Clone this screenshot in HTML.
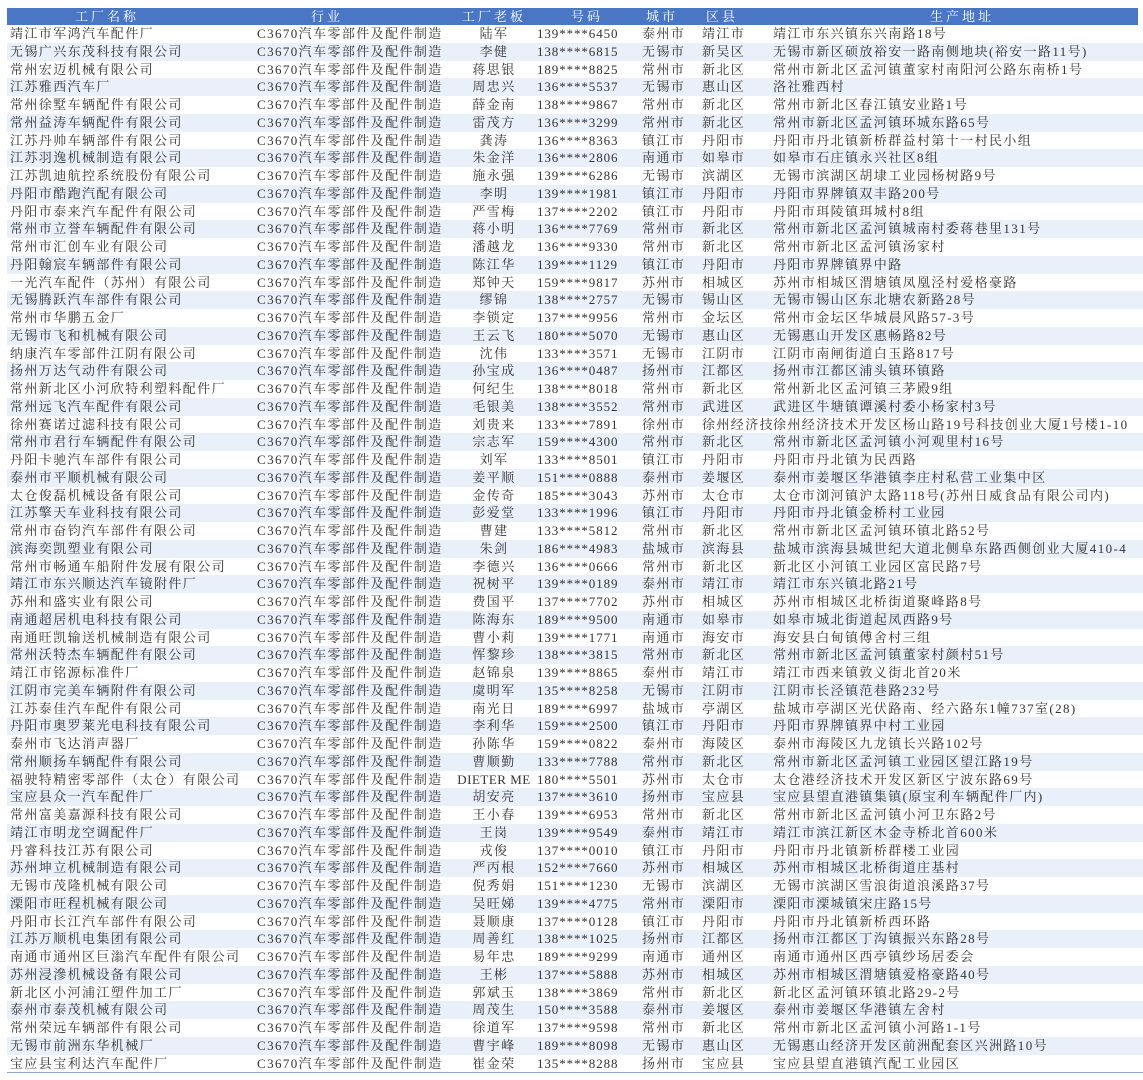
<!DOCTYPE html>
<html><head><meta charset="utf-8">
<style>
html,body{margin:0;padding:0;background:#fff;}
body{width:1143px;height:1080px;overflow:hidden;position:relative;font-family:"Liberation Serif","Noto Serif CJK SC",serif;color:#333;font-size:13px;}
.h{position:absolute;left:7px;top:8px;width:1131px;height:17px;background:#4a76c6;color:#fff;font-size:13px;letter-spacing:3px;}
.h span{position:absolute;top:0;line-height:17px;text-align:center;white-space:nowrap;}
#rows{position:absolute;left:7px;top:25px;width:1136px;border-bottom:1.5px solid #8fa8d4;}
.r{position:relative;height:17.76px;line-height:17.76px;white-space:nowrap;letter-spacing:1.4px;}
.r:nth-child(even){background:#eaf0f9;}
.r span{position:absolute;top:0;overflow:hidden;}
.c1{left:3px;width:248px}
.c2{left:250px;width:195px}
.c3{left:443px;width:88px;text-align:center}
.c4{left:530px;width:105px;letter-spacing:0.9px}
.c5{left:635px;width:60px}
.c6{left:695px;width:70px}
.c7{left:766px;width:380px}
</style></head><body>
<div class="h">
<span style="left:50px;width:100px">工厂名称</span>
<span style="left:280px;width:80px">行业</span>
<span style="left:443px;width:88px">工厂老板</span>
<span style="left:540px;width:80px">号码</span>
<span style="left:625px;width:60px">城市</span>
<span style="left:685px;width:60px">区县</span>
<span style="left:900px;width:110px">生产地址</span>
</div>
<div id="rows">
<div class="r"><span class="c1">靖江市军鸿汽车配件厂</span><span class="c2">C3670汽车零部件及配件制造</span><span class="c3">陆军</span><span class="c4">139****6450</span><span class="c5">泰州市</span><span class="c6">靖江市</span><span class="c7">靖江市东兴镇东兴南路18号</span></div>
<div class="r"><span class="c1">无锡广兴东茂科技有限公司</span><span class="c2">C3670汽车零部件及配件制造</span><span class="c3">李健</span><span class="c4">138****6815</span><span class="c5">无锡市</span><span class="c6">新吴区</span><span class="c7">无锡市新区硕放裕安一路南侧地块(裕安一路11号)</span></div>
<div class="r"><span class="c1">常州宏迈机械有限公司</span><span class="c2">C3670汽车零部件及配件制造</span><span class="c3">蒋思银</span><span class="c4">189****8825</span><span class="c5">常州市</span><span class="c6">新北区</span><span class="c7">常州市新北区孟河镇董家村南阳河公路东南桥1号</span></div>
<div class="r"><span class="c1">江苏雅西汽车厂</span><span class="c2">C3670汽车零部件及配件制造</span><span class="c3">周忠兴</span><span class="c4">136****5537</span><span class="c5">无锡市</span><span class="c6">惠山区</span><span class="c7">洛社雅西村</span></div>
<div class="r"><span class="c1">常州徐墅车辆配件有限公司</span><span class="c2">C3670汽车零部件及配件制造</span><span class="c3">薛金南</span><span class="c4">138****9867</span><span class="c5">常州市</span><span class="c6">新北区</span><span class="c7">常州市新北区春江镇安业路1号</span></div>
<div class="r"><span class="c1">常州益涛车辆配件有限公司</span><span class="c2">C3670汽车零部件及配件制造</span><span class="c3">雷茂方</span><span class="c4">136****3299</span><span class="c5">常州市</span><span class="c6">新北区</span><span class="c7">常州市新北区孟河镇环城东路65号</span></div>
<div class="r"><span class="c1">江苏丹帅车辆部件有限公司</span><span class="c2">C3670汽车零部件及配件制造</span><span class="c3">龚涛</span><span class="c4">136****8363</span><span class="c5">镇江市</span><span class="c6">丹阳市</span><span class="c7">丹阳市丹北镇新桥群益村第十一村民小组</span></div>
<div class="r"><span class="c1">江苏羽逸机械制造有限公司</span><span class="c2">C3670汽车零部件及配件制造</span><span class="c3">朱金洋</span><span class="c4">136****2806</span><span class="c5">南通市</span><span class="c6">如皋市</span><span class="c7">如皋市石庄镇永兴社区8组</span></div>
<div class="r"><span class="c1">江苏凯迪航控系统股份有限公司</span><span class="c2">C3670汽车零部件及配件制造</span><span class="c3">施永强</span><span class="c4">139****6286</span><span class="c5">无锡市</span><span class="c6">滨湖区</span><span class="c7">无锡市滨湖区胡埭工业园杨树路9号</span></div>
<div class="r"><span class="c1">丹阳市酷跑汽配有限公司</span><span class="c2">C3670汽车零部件及配件制造</span><span class="c3">李明</span><span class="c4">139****1981</span><span class="c5">镇江市</span><span class="c6">丹阳市</span><span class="c7">丹阳市界牌镇双丰路200号</span></div>
<div class="r"><span class="c1">丹阳市泰来汽车配件有限公司</span><span class="c2">C3670汽车零部件及配件制造</span><span class="c3">严雪梅</span><span class="c4">137****2202</span><span class="c5">镇江市</span><span class="c6">丹阳市</span><span class="c7">丹阳市珥陵镇珥城村8组</span></div>
<div class="r"><span class="c1">常州市立誉车辆配件有限公司</span><span class="c2">C3670汽车零部件及配件制造</span><span class="c3">蒋小明</span><span class="c4">136****7769</span><span class="c5">常州市</span><span class="c6">新北区</span><span class="c7">常州市新北区孟河镇城南村委蒋巷里131号</span></div>
<div class="r"><span class="c1">常州市汇创车业有限公司</span><span class="c2">C3670汽车零部件及配件制造</span><span class="c3">潘越龙</span><span class="c4">136****9330</span><span class="c5">常州市</span><span class="c6">新北区</span><span class="c7">常州市新北区孟河镇汤家村</span></div>
<div class="r"><span class="c1">丹阳翰宸车辆部件有限公司</span><span class="c2">C3670汽车零部件及配件制造</span><span class="c3">陈江华</span><span class="c4">139****1129</span><span class="c5">镇江市</span><span class="c6">丹阳市</span><span class="c7">丹阳市界牌镇界中路</span></div>
<div class="r"><span class="c1">一光汽车配件（苏州）有限公司</span><span class="c2">C3670汽车零部件及配件制造</span><span class="c3">郑钟天</span><span class="c4">159****9817</span><span class="c5">苏州市</span><span class="c6">相城区</span><span class="c7">苏州市相城区渭塘镇凤凰泾村爱格豪路</span></div>
<div class="r"><span class="c1">无锡腾跃汽车部件有限公司</span><span class="c2">C3670汽车零部件及配件制造</span><span class="c3">缪锦</span><span class="c4">138****2757</span><span class="c5">无锡市</span><span class="c6">锡山区</span><span class="c7">无锡市锡山区东北塘农新路28号</span></div>
<div class="r"><span class="c1">常州市华鹏五金厂</span><span class="c2">C3670汽车零部件及配件制造</span><span class="c3">李锁定</span><span class="c4">137****9956</span><span class="c5">常州市</span><span class="c6">金坛区</span><span class="c7">常州市金坛区华城晨风路57-3号</span></div>
<div class="r"><span class="c1">无锡市飞和机械有限公司</span><span class="c2">C3670汽车零部件及配件制造</span><span class="c3">王云飞</span><span class="c4">180****5070</span><span class="c5">无锡市</span><span class="c6">惠山区</span><span class="c7">无锡惠山开发区惠畅路82号</span></div>
<div class="r"><span class="c1">纳康汽车零部件江阴有限公司</span><span class="c2">C3670汽车零部件及配件制造</span><span class="c3">沈伟</span><span class="c4">133****3571</span><span class="c5">无锡市</span><span class="c6">江阴市</span><span class="c7">江阴市南闸街道白玉路817号</span></div>
<div class="r"><span class="c1">扬州万达气动件有限公司</span><span class="c2">C3670汽车零部件及配件制造</span><span class="c3">孙宝成</span><span class="c4">136****0487</span><span class="c5">扬州市</span><span class="c6">江都区</span><span class="c7">扬州市江都区浦头镇环镇路</span></div>
<div class="r"><span class="c1">常州新北区小河欣特利塑料配件厂</span><span class="c2">C3670汽车零部件及配件制造</span><span class="c3">何纪生</span><span class="c4">138****8018</span><span class="c5">常州市</span><span class="c6">新北区</span><span class="c7">常州新北区孟河镇三茅殿9组</span></div>
<div class="r"><span class="c1">常州远飞汽车配件有限公司</span><span class="c2">C3670汽车零部件及配件制造</span><span class="c3">毛银美</span><span class="c4">138****3552</span><span class="c5">常州市</span><span class="c6">武进区</span><span class="c7">武进区牛塘镇谭溪村委小杨家村3号</span></div>
<div class="r"><span class="c1">徐州赛诺过滤科技有限公司</span><span class="c2">C3670汽车零部件及配件制造</span><span class="c3">刘贵来</span><span class="c4">133****7891</span><span class="c5">徐州市</span><span class="c6">徐州经济技</span><span class="c7">徐州经济技术开发区杨山路19号科技创业大厦1号楼1-10</span></div>
<div class="r"><span class="c1">常州市君行车辆配件有限公司</span><span class="c2">C3670汽车零部件及配件制造</span><span class="c3">宗志军</span><span class="c4">159****4300</span><span class="c5">常州市</span><span class="c6">新北区</span><span class="c7">常州市新北区孟河镇小河观里村16号</span></div>
<div class="r"><span class="c1">丹阳卡驰汽车部件有限公司</span><span class="c2">C3670汽车零部件及配件制造</span><span class="c3">刘军</span><span class="c4">133****8501</span><span class="c5">镇江市</span><span class="c6">丹阳市</span><span class="c7">丹阳市丹北镇为民西路</span></div>
<div class="r"><span class="c1">泰州市平顺机械有限公司</span><span class="c2">C3670汽车零部件及配件制造</span><span class="c3">姜平顺</span><span class="c4">151****0888</span><span class="c5">泰州市</span><span class="c6">姜堰区</span><span class="c7">泰州市姜堰区华港镇李庄村私营工业集中区</span></div>
<div class="r"><span class="c1">太仓俊磊机械设备有限公司</span><span class="c2">C3670汽车零部件及配件制造</span><span class="c3">金传奇</span><span class="c4">185****3043</span><span class="c5">苏州市</span><span class="c6">太仓市</span><span class="c7">太仓市浏河镇沪太路118号(苏州日威食品有限公司内)</span></div>
<div class="r"><span class="c1">江苏擎天车业科技有限公司</span><span class="c2">C3670汽车零部件及配件制造</span><span class="c3">彭爱堂</span><span class="c4">133****1996</span><span class="c5">镇江市</span><span class="c6">丹阳市</span><span class="c7">丹阳市丹北镇金桥村工业园</span></div>
<div class="r"><span class="c1">常州市奋钧汽车部件有限公司</span><span class="c2">C3670汽车零部件及配件制造</span><span class="c3">曹建</span><span class="c4">133****5812</span><span class="c5">常州市</span><span class="c6">新北区</span><span class="c7">常州市新北区孟河镇环镇北路52号</span></div>
<div class="r"><span class="c1">滨海奕凯塑业有限公司</span><span class="c2">C3670汽车零部件及配件制造</span><span class="c3">朱剑</span><span class="c4">186****4983</span><span class="c5">盐城市</span><span class="c6">滨海县</span><span class="c7">盐城市滨海县城世纪大道北侧阜东路西侧创业大厦410-4</span></div>
<div class="r"><span class="c1">常州市畅通车船附件发展有限公司</span><span class="c2">C3670汽车零部件及配件制造</span><span class="c3">李德兴</span><span class="c4">136****0666</span><span class="c5">常州市</span><span class="c6">新北区</span><span class="c7">新北区小河镇工业园区富民路7号</span></div>
<div class="r"><span class="c1">靖江市东兴顺达汽车镜附件厂</span><span class="c2">C3670汽车零部件及配件制造</span><span class="c3">祝树平</span><span class="c4">139****0189</span><span class="c5">泰州市</span><span class="c6">靖江市</span><span class="c7">靖江市东兴镇北路21号</span></div>
<div class="r"><span class="c1">苏州和盛实业有限公司</span><span class="c2">C3670汽车零部件及配件制造</span><span class="c3">费国平</span><span class="c4">137****7702</span><span class="c5">苏州市</span><span class="c6">相城区</span><span class="c7">苏州市相城区北桥街道聚峰路8号</span></div>
<div class="r"><span class="c1">南通超居机电科技有限公司</span><span class="c2">C3670汽车零部件及配件制造</span><span class="c3">陈海东</span><span class="c4">189****9500</span><span class="c5">南通市</span><span class="c6">如皋市</span><span class="c7">如皋市城北街道起凤西路9号</span></div>
<div class="r"><span class="c1">南通旺凯输送机械制造有限公司</span><span class="c2">C3670汽车零部件及配件制造</span><span class="c3">曹小莉</span><span class="c4">139****1771</span><span class="c5">南通市</span><span class="c6">海安市</span><span class="c7">海安县白甸镇傅舍村三组</span></div>
<div class="r"><span class="c1">常州沃特杰车辆配件有限公司</span><span class="c2">C3670汽车零部件及配件制造</span><span class="c3">恽黎珍</span><span class="c4">138****3815</span><span class="c5">常州市</span><span class="c6">新北区</span><span class="c7">常州市新北区孟河镇董家村颜村51号</span></div>
<div class="r"><span class="c1">靖江市铭源标准件厂</span><span class="c2">C3670汽车零部件及配件制造</span><span class="c3">赵锦泉</span><span class="c4">139****8865</span><span class="c5">泰州市</span><span class="c6">靖江市</span><span class="c7">靖江市西来镇敦义街北首20米</span></div>
<div class="r"><span class="c1">江阴市完美车辆附件有限公司</span><span class="c2">C3670汽车零部件及配件制造</span><span class="c3">虞明军</span><span class="c4">135****8258</span><span class="c5">无锡市</span><span class="c6">江阴市</span><span class="c7">江阴市长泾镇范巷路232号</span></div>
<div class="r"><span class="c1">江苏泰佳汽车配件有限公司</span><span class="c2">C3670汽车零部件及配件制造</span><span class="c3">南光日</span><span class="c4">189****6997</span><span class="c5">盐城市</span><span class="c6">亭湖区</span><span class="c7">盐城市亭湖区光伏路南、经六路东1幢737室(28)</span></div>
<div class="r"><span class="c1">丹阳市奥罗莱光电科技有限公司</span><span class="c2">C3670汽车零部件及配件制造</span><span class="c3">李利华</span><span class="c4">159****2500</span><span class="c5">镇江市</span><span class="c6">丹阳市</span><span class="c7">丹阳市界牌镇界中村工业园</span></div>
<div class="r"><span class="c1">泰州市飞达消声器厂</span><span class="c2">C3670汽车零部件及配件制造</span><span class="c3">孙陈华</span><span class="c4">159****0822</span><span class="c5">泰州市</span><span class="c6">海陵区</span><span class="c7">泰州市海陵区九龙镇长兴路102号</span></div>
<div class="r"><span class="c1">常州顺扬车辆配件有限公司</span><span class="c2">C3670汽车零部件及配件制造</span><span class="c3">曹顺勤</span><span class="c4">133****7788</span><span class="c5">常州市</span><span class="c6">新北区</span><span class="c7">常州市新北区孟河镇工业园区望江路19号</span></div>
<div class="r"><span class="c1">福驶特精密零部件（太仓）有限公司</span><span class="c2">C3670汽车零部件及配件制造</span><span class="c3" style="letter-spacing:0.5px">DIETER ME</span><span class="c4">180****5501</span><span class="c5">苏州市</span><span class="c6">太仓市</span><span class="c7">太仓港经济技术开发区新区宁波东路69号</span></div>
<div class="r"><span class="c1">宝应县众一汽车配件厂</span><span class="c2">C3670汽车零部件及配件制造</span><span class="c3">胡安亮</span><span class="c4">137****3610</span><span class="c5">扬州市</span><span class="c6">宝应县</span><span class="c7">宝应县望直港镇集镇(原宝利车辆配件厂内)</span></div>
<div class="r"><span class="c1">常州富美嘉源科技有限公司</span><span class="c2">C3670汽车零部件及配件制造</span><span class="c3">王小春</span><span class="c4">139****6953</span><span class="c5">常州市</span><span class="c6">新北区</span><span class="c7">常州市新北区孟河镇小河卫东路2号</span></div>
<div class="r"><span class="c1">靖江市明龙空调配件厂</span><span class="c2">C3670汽车零部件及配件制造</span><span class="c3">王岗</span><span class="c4">139****9549</span><span class="c5">泰州市</span><span class="c6">靖江市</span><span class="c7">靖江市滨江新区木金寺桥北首600米</span></div>
<div class="r"><span class="c1">丹睿科技江苏有限公司</span><span class="c2">C3670汽车零部件及配件制造</span><span class="c3">戎俊</span><span class="c4">137****0010</span><span class="c5">镇江市</span><span class="c6">丹阳市</span><span class="c7">丹阳市丹北镇新桥群楼工业园</span></div>
<div class="r"><span class="c1">苏州坤立机械制造有限公司</span><span class="c2">C3670汽车零部件及配件制造</span><span class="c3">严丙根</span><span class="c4">152****7660</span><span class="c5">苏州市</span><span class="c6">相城区</span><span class="c7">苏州市相城区北桥街道庄基村</span></div>
<div class="r"><span class="c1">无锡市茂隆机械有限公司</span><span class="c2">C3670汽车零部件及配件制造</span><span class="c3">倪秀娟</span><span class="c4">151****1230</span><span class="c5">无锡市</span><span class="c6">滨湖区</span><span class="c7">无锡市滨湖区雪浪街道浪溪路37号</span></div>
<div class="r"><span class="c1">溧阳市旺程机械有限公司</span><span class="c2">C3670汽车零部件及配件制造</span><span class="c3">吴旺娣</span><span class="c4">139****4775</span><span class="c5">常州市</span><span class="c6">溧阳市</span><span class="c7">溧阳市溧城镇宋庄路15号</span></div>
<div class="r"><span class="c1">丹阳市长江汽车部件有限公司</span><span class="c2">C3670汽车零部件及配件制造</span><span class="c3">聂顺康</span><span class="c4">137****0128</span><span class="c5">镇江市</span><span class="c6">丹阳市</span><span class="c7">丹阳市丹北镇新桥西环路</span></div>
<div class="r"><span class="c1">江苏万顺机电集团有限公司</span><span class="c2">C3670汽车零部件及配件制造</span><span class="c3">周善红</span><span class="c4">138****1025</span><span class="c5">扬州市</span><span class="c6">江都区</span><span class="c7">扬州市江都区丁沟镇振兴东路28号</span></div>
<div class="r"><span class="c1">南通市通州区巨滃汽车配件有限公司</span><span class="c2">C3670汽车零部件及配件制造</span><span class="c3">易年忠</span><span class="c4">189****9299</span><span class="c5">南通市</span><span class="c6">通州区</span><span class="c7">南通市通州区西亭镇纱场居委会</span></div>
<div class="r"><span class="c1">苏州浸滲机械设备有限公司</span><span class="c2">C3670汽车零部件及配件制造</span><span class="c3">王彬</span><span class="c4">137****5888</span><span class="c5">苏州市</span><span class="c6">相城区</span><span class="c7">苏州市相城区渭塘镇爱格豪路40号</span></div>
<div class="r"><span class="c1">新北区小河浦江塑件加工厂</span><span class="c2">C3670汽车零部件及配件制造</span><span class="c3">郭斌玉</span><span class="c4">138****3869</span><span class="c5">常州市</span><span class="c6">新北区</span><span class="c7">新北区孟河镇环镇北路29-2号</span></div>
<div class="r"><span class="c1">泰州市泰茂机械有限公司</span><span class="c2">C3670汽车零部件及配件制造</span><span class="c3">周茂生</span><span class="c4">150****3588</span><span class="c5">泰州市</span><span class="c6">姜堰区</span><span class="c7">泰州市姜堰区华港镇左舍村</span></div>
<div class="r"><span class="c1">常州荣远车辆部件有限公司</span><span class="c2">C3670汽车零部件及配件制造</span><span class="c3">徐道军</span><span class="c4">137****9598</span><span class="c5">常州市</span><span class="c6">新北区</span><span class="c7">常州市新北区孟河镇小河路1-1号</span></div>
<div class="r"><span class="c1">无锡市前洲东华机械厂</span><span class="c2">C3670汽车零部件及配件制造</span><span class="c3">曹宇峰</span><span class="c4">189****8098</span><span class="c5">无锡市</span><span class="c6">惠山区</span><span class="c7">无锡惠山经济开发区前洲配套区兴洲路10号</span></div>
<div class="r"><span class="c1">宝应县宝利达汽车配件厂</span><span class="c2">C3670汽车零部件及配件制造</span><span class="c3">崔金荣</span><span class="c4">135****8288</span><span class="c5">扬州市</span><span class="c6">宝应县</span><span class="c7">宝应县望直港镇汽配工业园区</span></div>
</div>
</body></html>
